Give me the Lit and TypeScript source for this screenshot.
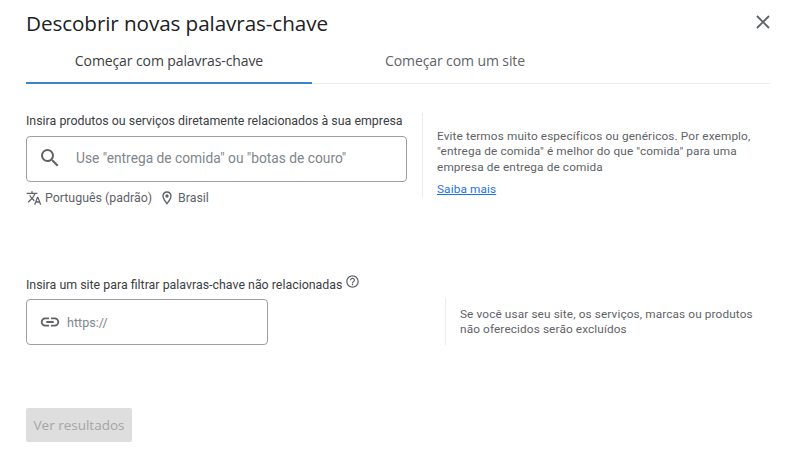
import { LitElement, html, css } from "lit";
import { customElement } from "lit/decorators.js";

@customElement("app-root")
export class AppRoot extends LitElement {
  static styles = css`
    :host { display: block; width: 800px; height: 450px; background: #fff; overflow: hidden; font-family: Roboto, "Liberation Sans", sans-serif; color: #5f6368; }
    .page { display: flex; flex-direction: column; padding: 0 30px 0 26px; height: 450px; box-sizing: border-box; }
    .head { display: flex; justify-content: space-between; align-items: center; height: 48px; }
    h1 { margin: 0; padding-bottom: 2px; font: 400 20.7px/28px "Open Sans", sans-serif; color: #202124; letter-spacing: -0.1px; }
    .close { width: 16px; height: 16px; margin-right: -1px; margin-top: -4px; }
    .tabs { display: flex; height: 35px; border-bottom: 1px solid #ececec; font: 500 14px/24px "Open Sans", sans-serif; }
    .tab { width: 286px; text-align: center; box-sizing: border-box; height: 35px; padding-top: 1px; letter-spacing: -0.1px; color: #5f6368; }
    .tab.on { color: #3c4043; border-bottom: 2px solid #3b82c9; height: 36px; }
    .sec { display: flex; align-items: flex-start; }
    .s1 { margin-top: 29px; height: 85px; }
    .s2 { margin-top: 79px; height: 70px; }
    .col { display: flex; flex-direction: column; }
    .c1 { width: 381px; }
    .c2 { width: 242px; }
    .label { font-size: 12.4px; line-height: 16px; color: #3c4043; display: flex; align-items: flex-start; gap: 3px; white-space: nowrap; }
    .field { box-sizing: border-box; border: 1px solid #9aa0a6; border-radius: 4px; display: flex; align-items: center; color: #80868b; }
    .f1 { width: 381px; height: 46px; padding: 0 0 2px 11px; font-size: 13.75px; margin-top: 7px; }
    .f2 { width: 242px; height: 46px; padding-left: 12px; font-size: 12.6px; margin-top: 6px; }
    .f1 svg { width: 24px; height: 24px; margin-right: 14px; flex: none; }
    .f2 svg { width: 22px; height: 22px; margin-right: 6px; flex: none; }
    .meta { display: flex; align-items: center; font-size: 12.4px; line-height: 16px; margin-top: 8px; color: #5f6368; }
    .meta svg { width: 16px; height: 16px; flex: none; }
    .m1 { margin-right: 3px; }
    .m2 { margin: 0 3px 0 7px; }
    .note { border-left: 1px solid #ececec; font-size: 11.8px; line-height: 15.3px; color: #5f6368; letter-spacing: 0.12px; box-sizing: border-box; white-space: nowrap; }
    .n1 { margin-left: 15px; padding: 16px 0 0 14px; height: 85px; width: 345px; }
    .n2 { margin-left: 177px; padding: 9px 0 0 14px; height: 47px; margin-top: 21px; width: 325px; }
    a { display: block; color: #1a73e8; text-decoration: underline; margin-top: 7px; }
    .help { width: 15px; height: 15px; margin-top: -3px; flex: none; }
    button { margin-top: 61px; width: 106px; height: 34px; border: 0; border-radius: 2px; background: #dedede; color: #a5a5a5; font: 500 13.5px "Open Sans", sans-serif; padding: 0; align-self: flex-start; }
  `;

  render() {
    return html`<div class="page">
      <div class="head">
        <h1>Descobrir novas palavras-chave</h1>
        <svg class="close" viewBox="0 0 16 16"><path d="M2 2 14 14M14 2 2 14" stroke="#5f6368" stroke-width="1.9" fill="none"/></svg>
      </div>
      <div class="tabs">
        <div class="tab on">Começar com palavras-chave</div>
        <div class="tab">Começar com um site</div>
      </div>
      <div class="sec s1">
        <div class="col c1">
          <div class="label">Insira produtos ou serviços diretamente relacionados à sua empresa</div>
          <div class="field f1">
            <svg viewBox="0 0 24 24" fill="#5f6368"><path d="M15.5 14h-.79l-.28-.27A6.47 6.47 0 0 0 16 9.5 6.5 6.5 0 1 0 9.5 16c1.61 0 3.09-.59 4.23-1.57l.27.28v.79l5 4.99L20.49 19l-4.99-5zm-6 0C7.01 14 5 11.99 5 9.5S7.01 5 9.5 5 14 7.01 14 9.5 11.99 14 9.5 14z"/></svg>
            <span>Use "entrega de comida" ou "botas de couro"</span>
          </div>
          <div class="meta">
            <svg class="m1" viewBox="0 0 24 24" fill="#5f6368"><path d="m12.87 15.07-2.54-2.51.03-.03A17.52 17.52 0 0 0 14.07 6H17V4h-7V2H8v2H1v1.99h11.17C11.5 7.92 10.44 9.75 9 11.35 8.07 10.32 7.3 9.19 6.69 8h-2c.73 1.63 1.73 3.17 2.98 4.56l-5.09 5.02L4 19l5-5 3.11 3.11.76-2.04zM18.5 10h-2L12 22h2l1.12-3h4.75L21 22h2l-4.5-12zm-2.62 7 1.62-4.33L19.12 17h-3.24z"/></svg>
            <span>Português (padrão)</span>
            <svg class="m2" viewBox="0 0 24 24" fill="#5f6368"><path d="M12 2C8.13 2 5 5.13 5 9c0 5.25 7 13 7 13s7-7.75 7-13c0-3.87-3.13-7-7-7zM7 9c0-2.76 2.24-5 5-5s5 2.24 5 5c0 2.88-2.88 7.19-5 9.88C9.92 16.21 7 11.85 7 9z"/><circle cx="12" cy="9" r="2.5"/></svg>
            <span>Brasil</span>
          </div>
        </div>
        <div class="note n1">
          Evite termos muito específicos ou genéricos. Por exemplo,<br>"entrega de comida" é melhor do que "comida" para uma<br>empresa de entrega de comida
          <a>Saiba mais</a>
        </div>
      </div>
      <div class="sec s2">
        <div class="col c2">
          <div class="label">Insira um site para filtrar palavras-chave não relacionadas
            <svg class="help" viewBox="0 0 24 24" fill="#5f6368"><path d="M11 18h2v-2h-2v2zm1-16C6.48 2 2 6.48 2 12s4.48 10 10 10 10-4.48 10-10S17.52 2 12 2zm0 18c-4.41 0-8-3.59-8-8s3.59-8 8-8 8 3.59 8 8-3.59 8-8 8zm0-14c-2.21 0-4 1.79-4 4h2c0-1.1.9-2 2-2s2 .9 2 2c0 2-3 1.75-3 5h2c0-2.25 3-2.5 3-5 0-2.21-1.79-4-4-4z"/></svg>
          </div>
          <div class="field f2">
            <svg viewBox="0 0 24 24" fill="#5f6368"><path d="M3.9 12c0-1.71 1.39-3.1 3.1-3.1h4V7H7c-2.76 0-5 2.24-5 5s2.24 5 5 5h4v-1.9H7c-1.71 0-3.1-1.39-3.1-3.1zM8 13h8v-2H8v2zm9-6h-4v1.9h4c1.71 0 3.1 1.39 3.1 3.1s-1.39 3.1-3.1 3.1h-4V17h4c2.76 0 5-2.24 5-5s-2.24-5-5-5z"/></svg>
            <span>https://</span>
          </div>
        </div>
        <div class="note n2">Se você usar seu site, os serviços, marcas ou produtos<br>não oferecidos serão excluídos</div>
      </div>
      <button>Ver resultados</button>
    </div>`;
  }
}
